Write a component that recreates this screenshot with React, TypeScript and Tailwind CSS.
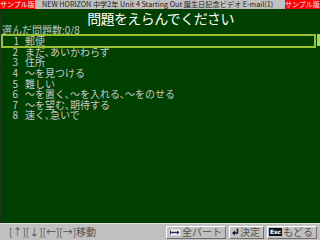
import React from "react";

const items = [
  "郵便",
  "まだ､あいかわらず",
  "住所",
  "～を見つける",
  "難しい",
  "～を置く､～を入れる､～をのせる",
  "～を望む､期待する",
  "速く､急いで",
];

function HomeKey() {
  return (
    <svg width="12" height="7" viewBox="0 0 12 7" className="mr-[1px]">
      <rect x="0" y="0" width="12" height="7" fill="#f0f0f0" stroke="#808080" strokeWidth="0.5" />
      <line x1="1.5" y1="3.5" x2="10" y2="3.5" stroke="#203060" strokeWidth="1.5" />
      <path d="M8 1.5 L10.5 3.5 L8 5.5 Z" fill="#203060" />
      <line x1="1.5" y1="1.5" x2="1.5" y2="5.5" stroke="#203060" strokeWidth="1" />
    </svg>
  );
}

function EnterKey() {
  return (
    <svg width="7" height="8" viewBox="0 0 7 8" className="mr-[1px]">
      <path d="M5.5 0.5 V5 H1.5" fill="none" stroke="#101830" strokeWidth="1.4" />
      <path d="M0 5 L3 2.5 L3 7.5 Z" fill="#101830" />
    </svg>
  );
}

export default function App() {
  const jp = { fontFamily: '"Noto Sans CJK JP", "DejaVu Sans", sans-serif' };
  return (
    <div className="w-[320px] h-[240px] flex flex-col bg-[#c0c0c0] overflow-hidden" style={jp}>
      <div className="h-[9px] flex items-center bg-[#c0c0c0] text-[7.2px] leading-none text-[#202020] whitespace-nowrap">
        <span className="bg-[#ff0000] text-white h-[9px] w-[35px] flex items-center text-[7px] shrink-0">サンプル版</span>
        <span className="flex-1 pl-[7px]">NEW HORIZON 中学2年 Unit 4 Starting Out 誕生日記念ビデオ E-mail(1)</span>
        <span className="bg-[#ff0000] text-white h-[9px] w-[35px] flex items-center text-[7px] shrink-0">サンプル版</span>
      </div>
      <div className="h-[214px] bg-[#004000] flex flex-col border-l border-[#183818]">
        <div className="h-[16px] flex items-center justify-center text-white text-[14px] leading-none tracking-[-0.6px] pt-[1px]">
          問題をえらんでください
        </div>
        <div className="h-[9px] flex items-center text-[#c8c8c8] text-[10px] leading-none pl-[1px]">
          選んだ問題数:0/8
        </div>
        <div className="flex h-[12px]">
          <div className="flex-1 flex flex-col">
            <div className="h-[1px] bg-[#705030]"></div>
            <div className="flex-1 border-2 border-[#98c030] flex items-center text-[10px] leading-[10px] text-[#c8c8c8]">
              <span className="w-[22px] text-right pr-[6px] shrink-0">1</span>
              <span>{items[0]}</span>
            </div>
          </div>
          <div className="w-[3px] bg-[#a0e040] ml-[1px]"></div>
        </div>
        <div className="flex flex-col pt-[0.5px]">
          {items.slice(1).map((t, i) => (
            <div
              key={i}
              className="h-[10.6px] flex items-center text-[10px] leading-[10px] text-[#c8c8c8]"
            >
              <span className="w-[24px] text-right pr-[7px] shrink-0">{i + 2}</span>
              <span>{t}</span>
            </div>
          ))}
        </div>
      </div>
      <div className="flex-1 flex items-center bg-[#c0c0c0] text-[10px] leading-none text-[#505050] pl-[9px] pr-[3px] border-t border-[#e0e0e0]">
        <span className="flex-1">[↑][↓][←][→]移動</span>
        <div className="flex items-center gap-[3px]">
          <span className="flex items-center h-[13px] pl-[2px] pr-[3px] border border-t-white border-l-white border-r-[#707070] border-b-[#707070]">
            <HomeKey />全パート
          </span>
          <span className="flex items-center h-[13px] pl-[2px] pr-[3px] border border-t-white border-l-white border-r-[#707070] border-b-[#707070]">
            <EnterKey />決定
          </span>
          <span className="flex items-center h-[13px] pl-[1px] pr-[3px] border border-t-white border-l-white border-r-[#707070] border-b-[#707070]">
            <span
              className="text-[6px] leading-none bg-[#101010] text-white px-[1px] py-[1px] mr-[1px] font-bold"
              style={{ fontFamily: '"DejaVu Sans", sans-serif' }}
            >
              Esc
            </span>
            もどる
          </span>
        </div>
      </div>
    </div>
  );
}
